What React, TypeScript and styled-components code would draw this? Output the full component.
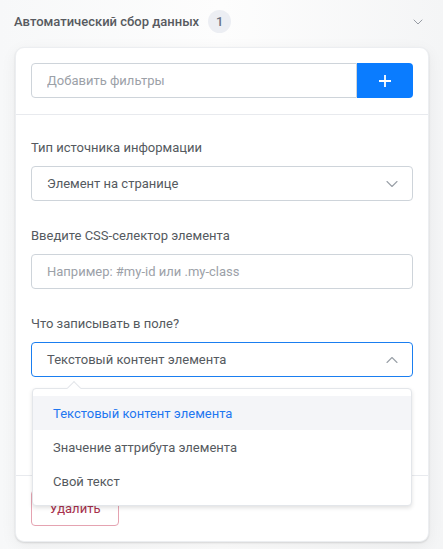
import styled, { createGlobalStyle } from "styled-components";

const GlobalStyle = createGlobalStyle`
  html, body {
    margin: 0;
    padding: 0;
    background: #f9fafb;
  }
  body {
    font-family: Roboto, "Noto Sans", sans-serif;
    color: #555;
  }
  * {
    box-sizing: border-box;
  }
`;

const Page = styled.div`
  width: 443px;
  min-height: 549px;
  padding: 0 14px 5px 15px;
  background: linear-gradient(90deg, #f7f8f9 0%, #fdfdfd 50%, #f4f5f6 100%);
`;

const Header = styled.div`
  display: flex;
  align-items: center;
  height: 47px;
  padding: 0 6px 4px 0;
  margin-left: -1px;
`;

const Title = styled.span`
  font-size: 13px;
  font-weight: 500;
  color: #575a60;
`;

const Badge = styled.span`
  display: inline-flex;
  align-items: center;
  justify-content: center;
  width: 23px;
  height: 23px;
  margin-left: 9px;
  border-radius: 50%;
  background: #eceef3;
  color: #6b7386;
  font-size: 13px;
  font-weight: 500;
`;

const Spacer = styled.div`
  flex: 1;
`;

const Card = styled.div`
  position: relative;
  background: #fff;
  border-radius: 9px;
  border: 1px solid #eceef1;
  box-shadow: 0 1px 2px rgba(0, 0, 0, 0.12), 0 4px 16px rgba(0, 0, 0, 0.06);
`;

const Section = styled.div<{ $pad?: string; $border?: boolean }>`
  padding: ${(p) => p.$pad || "15px"};
  border-bottom: ${(p) => (p.$border ? "1px solid #e8eaee" : "none")};
`;

const InputGroup = styled.div`
  display: flex;
  height: 35px;
`;

const TextInput = styled.input<{ $grouped?: boolean }>`
  flex: ${(p) => (p.$grouped ? "1" : "none")};
  width: 100%;
  min-width: 0;
  height: 35px;
  margin: 0;
  border: 1px solid #ced4da;
  border-radius: ${(p) => (p.$grouped ? "4px 0 0 4px" : "4px")};
  padding: 0 15px;
  font-family: inherit;
  font-size: 13px;
  color: #495057;
  background: #fff;
  outline: none;
  &::placeholder {
    color: #9ca1a8;
  }
`;

const AddButton = styled.button`
  width: 56px;
  border: none;
  border-radius: 0 4px 4px 0;
  background: #0a7cff;
  display: flex;
  align-items: center;
  justify-content: center;
  padding: 0;
`;

const Field = styled.div`
  display: flex;
  flex-direction: column;
  position: relative;
  & + & {
    margin-top: 25px;
  }
`;

const Label = styled.label`
  font-size: 13px;
  color: #555a60;
  line-height: 20px;
  margin-bottom: 8px;
`;

const SelectBox = styled.div<{ $open?: boolean }>`
  display: flex;
  align-items: center;
  justify-content: space-between;
  height: 35px;
  padding: 0 14px 0 15px;
  border: 1px solid ${(p) => (p.$open ? "#1a7ef0" : "#ced4da")};
  border-radius: 4px;
  font-size: 13px;
  color: #555a60;
  background: #fff;
`;

const Menu = styled.div`
  position: absolute;
  top: 74px;
  left: 1px;
  right: 1px;
  z-index: 5;
  padding: 7px 0;
  background: #fff;
  border: 1px solid #e3e6ea;
  border-radius: 4px;
  box-shadow: 0 2px 4px rgba(0, 0, 0, 0.12);
  &::before {
    content: "";
    position: absolute;
    top: -6px;
    left: 36px;
    width: 9px;
    height: 9px;
    background: #fff;
    border-left: 1px solid #e3e6ea;
    border-top: 1px solid #e3e6ea;
    transform: rotate(45deg);
  }
`;

const MenuItem = styled.div<{ $active?: boolean }>`
  position: relative;
  height: 34px;
  display: flex;
  align-items: center;
  padding: 0 20px;
  font-size: 13px;
  color: ${(p) => (p.$active ? "#1f77f0" : "#555a60")};
  background: ${(p) => (p.$active ? "#f4f5f8" : "transparent")};
`;

const DeleteButton = styled.button`
  width: 88px;
  height: 36px;
  padding: 0;
  border: 1px solid #e5a3b1;
  border-radius: 4px;
  background: #fff;
  color: #a8304c;
  font-family: inherit;
  font-size: 13px;
`;

const Chevron = ({ up, size = 10, color = "#9aa0a8" }: { up?: boolean; size?: number; color?: string }) => (
  <svg width={size + 2} height={size} viewBox="0 0 12 10" fill="none">
    <path
      d={up ? "M1 7.5 L6 2.5 L11 7.5" : "M1 2.5 L6 7.5 L11 2.5"}
      stroke={color}
      strokeWidth="1.1"
      strokeLinecap="round"
      strokeLinejoin="round"
    />
  </svg>
);

export default function App() {
  return (
    <>
      <GlobalStyle />
      <Page>
        <Header>
          <Title>Автоматический сбор данных</Title>
          <Badge>1</Badge>
          <Spacer />
          <Chevron size={8} color="#8a8f98" />
        </Header>
        <Card>
          <Section $pad="15px 15px 16px" $border>
            <InputGroup>
              <TextInput $grouped placeholder="Добавить фильтры" />
              <AddButton>
                <svg width="14" height="14" viewBox="0 0 14 14">
                  <path d="M7 1 V13 M1 7 H13" stroke="#fff" strokeWidth="1.8" />
                </svg>
              </AddButton>
            </InputGroup>
          </Section>
          <Section $pad="23px 15px 98px" $border>
            <Field>
              <Label>Тип источника информации</Label>
              <SelectBox>
                <span>Элемент на странице</span>
                <Chevron />
              </SelectBox>
            </Field>
            <Field>
              <Label>Введите CSS-селектор элемента</Label>
              <TextInput placeholder="Например: #my-id или .my-class" />
            </Field>
            <Field>
              <Label>Что записывать в поле?</Label>
              <SelectBox $open>
                <span>Текстовый контент элемента</span>
                <Chevron up />
              </SelectBox>
              <Menu>
                <MenuItem $active>Текстовый контент элемента</MenuItem>
                <MenuItem>Значение аттрибута элемента</MenuItem>
                <MenuItem>Свой текст</MenuItem>
              </Menu>
            </Field>
          </Section>
          <Section $pad="14px 15px 15px">
            <DeleteButton>Удалить</DeleteButton>
          </Section>
        </Card>
      </Page>
    </>
  );
}
